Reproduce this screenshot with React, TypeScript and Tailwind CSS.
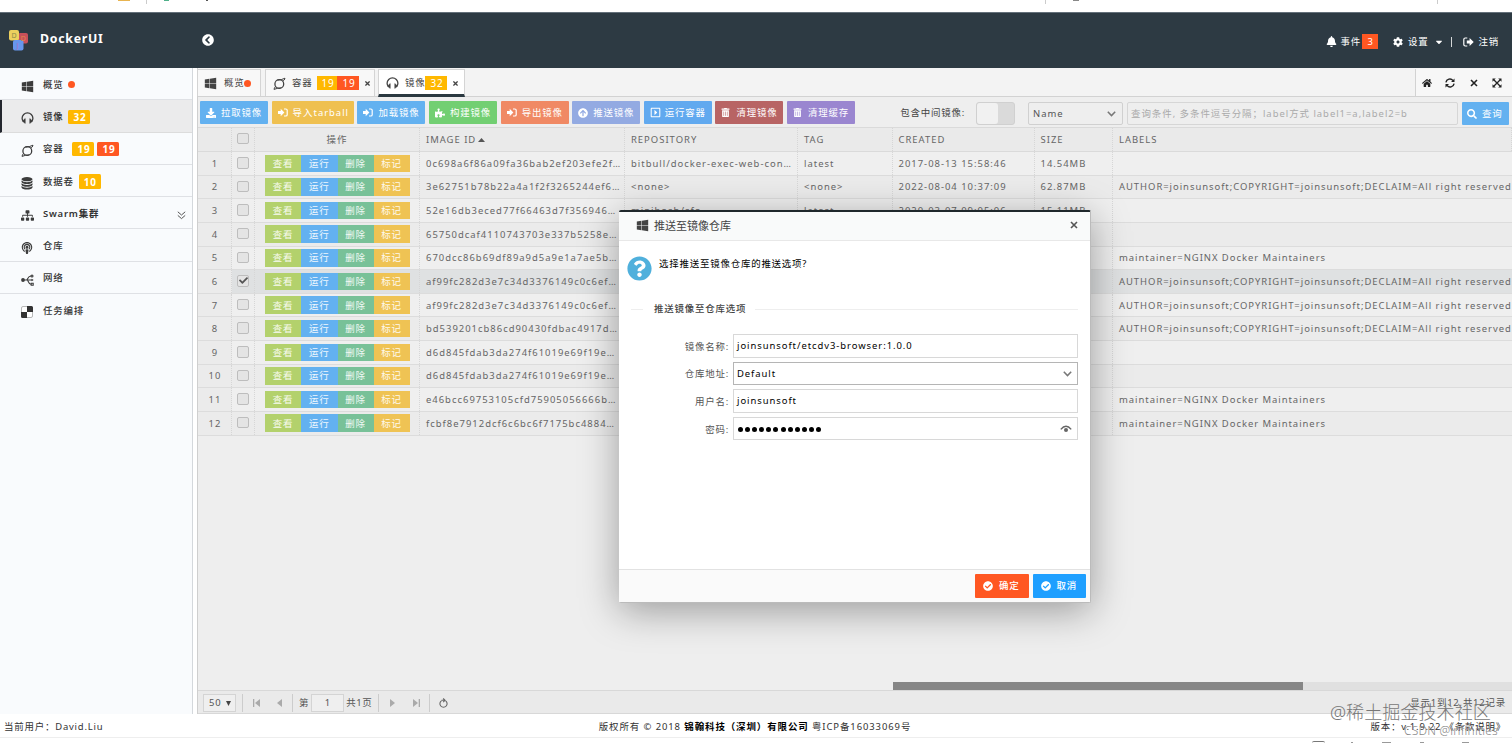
import { useState } from "react";
import type { ReactNode } from "react";
import {
  FaArrowCircleUp,
  FaBell,
  FaCaretDown,
  FaCheck,
  FaCheckCircle,
  FaChevronCircleLeft,
  FaCog,
  FaDownload,
  FaHome,
  FaPodcast,
  FaPuzzlePiece,
  FaQuestionCircle,
  FaRegCaretSquareRight,
  FaSearch,
  FaSitemap,
  FaTimes,
  FaTrashAlt,
  FaWindows,
} from "react-icons/fa";

/* ---------- icons ---------- */

const HeadsetIcon = () => (
  <svg width="13" height="12" viewBox="0 0 13 12" fill="none" stroke="currentColor">
    <path d="M2.6 10A5.4 5.4 0 0 1 1.1 6.3a5.4 5.4 0 0 1 10.8 0A5.4 5.4 0 0 1 10.4 10" strokeWidth="1.3" />
    <path d="M4.2 6.6v4.8L1.6 9zM8.8 6.6v4.8L11.4 9z" fill="currentColor" strokeWidth=".6" />
  </svg>
);

const RingIcon = () => (
  <svg width="13" height="13" viewBox="0 0 13 13" fill="none" stroke="currentColor" strokeWidth="1.3">
    <circle cx="6.3" cy="7" r="4.4" />
    <path d="M4.4 3.2Q8.4 3 12 1.2Q11.6 3.2 9.8 4.4M8.2 10.9Q4.4 11 1 12.4Q1.2 10.8 2.6 9.4" strokeWidth="1" />
  </svg>
);

const StackIcon = () => (
  <svg width="12" height="13" viewBox="0 0 12 13" fill="currentColor">
    <ellipse cx="6" cy="2.2" rx="5.5" ry="2.1" />
    <path d="M.5 3.5Q2 5.2 6 5.2T11.5 3.5V5Q10.500 7 6 7T.5 5zM.5 6.300Q2 8 6 8T11.500 6.300V7.800Q10.500 9.800 6 9.800T.5 7.800zM.5 9.100Q2 10.800 6 10.800T11.500 9.100V10.600Q10.500 12.600 6 12.600T.5 10.600z" />
  </svg>
);

const NetworkIcon = () => (
  <svg width="13" height="12" viewBox="0 0 13 12" fill="none" stroke="currentColor" strokeWidth="1.1">
    <circle cx="2" cy="6" r="1.9" fill="currentColor" stroke="none" />
    <path d="M3 6h8.500M5.500 6C7 6 6.600 2 10 2M6 6C7.500 6 7 10.200 10 10.200" />
    <circle cx="11" cy="2" r="1" />
    <path d="M10.500 4.800 12.700 6 10.500 7.200z" fill="currentColor" stroke="none" />
    <path d="M10.200 9.200h2v2h-2z" />
  </svg>
);

const TilesIcon = () => (
  <svg width="12" height="12" viewBox="0 0 12 12">
    <rect x=".5" y=".5" width="11" height="11" rx="1.500" fill="#fff" stroke="#999" strokeWidth=".7" />
    <path d="M6 0h4.500Q12 0 12 1.500V6H6zM0 6h6v6H1.500Q0 12 0 10.500z" fill="#333" />
  </svg>
);

const SignInIcon = () => (
  <svg width="10" height="9" viewBox="0 0 10 9">
    <path d="M0 3h2.700V.8L6.400 4.500 2.700 8.200V6H0z" fill="currentColor" />
    <path d="M6 1h1.800q1.400 0 1.400 1.300v4.400Q9.200 8 7.800 8H6" fill="none" stroke="currentColor" strokeWidth="1.200" />
  </svg>
);

const SignOutIcon = () => (
  <svg width="11" height="10" viewBox="0 0 11 10">
    <path d="M3.800 3.400h2.800V1L10.700 5 6.600 9V6.600H3.800z" fill="currentColor" />
    <path d="M4.300 1H2.200Q.8 1 .8 2.400v5.200Q.8 9 2.200 9h2.100" fill="none" stroke="currentColor" strokeWidth="1.200" />
  </svg>
);

const RefreshIcon = () => (
  <svg width="10" height="10" viewBox="0 0 10 10" fill="none" stroke="currentColor" strokeWidth="1.4">
    <path d="M.9 4.400A4 4 0 0 1 8 2.600M9.100 5.600A4 4 0 0 1 2 7.400" />
    <path d="M9.500.6v3.500H6zM.5 9.400V5.900H4z" fill="currentColor" stroke="none" />
  </svg>
);

const ExpandIcon = () => (
  <svg width="10" height="10" viewBox="0 0 10 10" fill="currentColor">
    <path d="M.5.5h3.300L.5 3.800zM9.500.5v3.300L6.200.5zM.5 9.500V6.200l3.300 3.300zM9.500 9.500H6.200l3.300-3.300z" />
    <path d="M2 2l6 6M8 2 2 8" stroke="currentColor" strokeWidth="1.300" />
  </svg>
);

const CloseIcon = ({ className = "" }: { className?: string }) => (
  <svg className={className} width="8" height="8" viewBox="0 0 8 8" stroke="currentColor" strokeWidth="1.600">
    <path d="M1 1l6 6M7 1 1 7" />
  </svg>
);

const Chevron = () => (
  <svg width="9" height="6" viewBox="0 0 9 6" fill="none" stroke="#777" strokeWidth="1.500">
    <path d="M.8 .8 4.500 4.600 8.200 .8" />
  </svg>
);

const Logo = () => (
  <svg width="22" height="22" viewBox="0 0 22 22" className="font-['Noto_Sans']">
    <rect x="10" y="3" width="10" height="10.500" rx="2" fill="#c8505a" />
    <rect x="1" y="0" width="10" height="10.500" rx="2" fill="#ecd05e" />
    <rect x="5" y="10" width="10.500" height="10.500" rx="2" fill="#6796ec" />
    <text x="3.400" y="8" fontSize="7" fill="#8b8a4b">D</text>
    <text x="12.800" y="11" fontSize="7" fill="#e58a4a">D</text>
    <text x="8.600" y="18" fontSize="7" fill="#b06fb8">J</text>
  </svg>
);

/* ---------- data ---------- */

const menus: { name: string; icon: ReactNode; dot?: boolean; badges?: string[]; more?: boolean; gap?: string }[] = [
  { name: "概览", icon: <FaWindows size={13} />, dot: true },
  { name: "镜像", icon: <HeadsetIcon />, badges: ["32"] },
  { name: "容器", icon: <RingIcon />, badges: ["19", "19"], gap: "ml-[9px]" },
  { name: "数据卷", icon: <StackIcon />, badges: ["10"] },
  { name: "Swarm集群", icon: <FaSitemap size={13} />, more: true },
  { name: "仓库", icon: <FaPodcast size={12} /> },
  { name: "网络", icon: <NetworkIcon /> },
  { name: "任务编排", icon: <TilesIcon /> },
];

const tools = [
  { name: "拉取镜像", icon: <FaDownload size={10} />, cls: "w-[68px] bg-[#63b1f0]" },
  { name: "导入tarball", icon: <SignInIcon />, cls: "w-[82.3px] bg-[#efc050] text-[#fbf0d0] tracking-[1px]" },
  { name: "加载镜像", icon: <SignInIcon />, cls: "w-[68px] bg-[#63b1f0]" },
  { name: "构建镜像", icon: <FaPuzzlePiece size={10} />, cls: "w-[68px] bg-[#72cf72]" },
  { name: "导出镜像", icon: <SignInIcon />, cls: "w-[68px] bg-[#f08964]" },
  { name: "推送镜像", icon: <FaArrowCircleUp size={10} />, cls: "w-[68px] bg-[#93aae2]" },
  { name: "运行容器", icon: <FaRegCaretSquareRight size={11} />, cls: "w-[68px] bg-[#61a9ef]" },
  { name: "清理镜像", icon: <FaTrashAlt size={9} />, cls: "w-[68px] bg-[#b86464]" },
  { name: "清理缓存", icon: <FaTrashAlt size={9} />, cls: "w-[68px] bg-[#9a86d0]" },
];

const AUTHOR = "AUTHOR=joinsunsoft;COPYRIGHT=joinsunsoft;DECLAIM=All right reserved";
const NGINX = "maintainer=NGINX Docker Maintainers";

const images = [
  { id: "0c698a6f86a09fa36bab2ef203efe2f…", repo: "bitbull/docker-exec-web-con…", tag: "latest", created: "2017-08-13 15:58:46", size: "14.54MB", labels: "" },
  { id: "3e62751b78b22a4a1f2f3265244ef6…", repo: "<none>", tag: "<none>", created: "2022-08-04 10:37:09", size: "62.87MB", labels: AUTHOR },
  { id: "52e16db3eced77f66463d7f356946…", repo: "minibosh/sfo", tag: "latest", created: "2020-03-07 09:05:06", size: "15.11MB", labels: "" },
  { id: "65750dcaf4110743703e337b5258e…", repo: "", tag: "", created: "", size: "", labels: "" },
  { id: "670dcc86b69df89a9d5a9e1a7ae5b…", repo: "", tag: "", created: "", size: "", labels: NGINX },
  { id: "af99fc282d3e7c34d3376149c0c6ef…", repo: "", tag: "", created: "", size: "", labels: AUTHOR },
  { id: "af99fc282d3e7c34d3376149c0c6ef…", repo: "", tag: "", created: "", size: "", labels: AUTHOR },
  { id: "bd539201cb86cd90430fdbac4917d…", repo: "", tag: "", created: "", size: "", labels: AUTHOR },
  { id: "d6d845fdab3da274f61019e69f19e…", repo: "", tag: "", created: "", size: "", labels: "" },
  { id: "d6d845fdab3da274f61019e69f19e…", repo: "", tag: "", created: "", size: "", labels: "" },
  { id: "e46bcc69753105cfd75905056666b…", repo: "", tag: "", created: "", size: "", labels: NGINX },
  { id: "fcbf8e7912dcf6c6bc6f7175bc4884…", repo: "", tag: "", created: "", size: "", labels: NGINX },
];

const gridCols = "grid grid-cols-[34px_23px_165px_205px_173px_94.5px_142px_78.5px_1fr]";
const cell = "flex items-center border-r border-dotted border-[#d6d6d6] pl-[6px] overflow-hidden whitespace-nowrap";

/* ---------- layout parts ---------- */

function Header() {
  return (
    <header className="flex h-[56px] shrink-0 items-center border-t border-[#64707a] bg-[#2d3a43] text-white">
      <div className="flex w-[202px] items-center pl-[8px]">
        <Logo />
        <span className="mb-[3px] ml-[10px] text-[12.3px] font-bold tracking-[0.75px]">DockerUI</span>
      </div>
      <FaChevronCircleLeft size={12} className="mb-[2px]" />
      <div className="ml-auto mt-[2px] flex items-center pr-[13px]">
        <FaBell size={11} />
        <span className="ml-[4px]">事件</span>
        <span className="ml-[1px] flex h-[15px] w-[16px] items-center justify-center bg-[#ff5722] pl-px">3</span>
        <FaCog size={10} className="ml-[15px]" />
        <span className="ml-[5px]">设置</span>
        <FaCaretDown size={10} className="ml-[5px]" />
        <span className="ml-[7px] h-[10px] w-px bg-white/80" />
        <span className="ml-[11px]">
          <SignOutIcon />
        </span>
        <span className="ml-[5px]">注销</span>
      </div>
    </header>
  );
}

function Sidebar() {
  return (
    <aside className="w-[193px] shrink-0 border-r border-[#d4d8dc] bg-[#f9fbfd]">
      {menus.map((m, i) => (
        <div
          key={m.name}
          className={`flex h-[32.3px] items-center border-b pt-[2px] text-[#333] ${
            i === 1
              ? "border-[#dcdcdc] border-l-2 border-l-[#23262e] bg-[#ebebec] pl-[18.5px]"
              : i === 7
                ? "border-transparent pl-[20.5px]"
                : "border-[#dfe1e5] pl-[20.5px]"
          }`}
        >
          <span className="mt-[3px] flex w-[22.5px] text-[#3c3c3c]">{m.icon}</span>
          <span className={m.more ? "font-semibold" : "font-medium"}>{m.name}</span>
          {m.dot && <span className="ml-[5px] size-[7px] rounded-full bg-[#ff5722]" />}
          {m.badges?.map((b, n) => (
            <span
              key={n}
              className={`flex h-[14.5px] w-[22px] items-center justify-center rounded-[1.5px] pl-[1px] text-[10px] font-bold text-white ${
                n ? "ml-[3px] bg-[#ff5722]" : "bg-[#ffb800]"
              } ${n ? "" : m.gap ?? "ml-[5px]"}`}
            >
              {b}
            </span>
          ))}
          {m.more && (
            <svg className="ml-auto mr-[6px] mt-[3px]" width="9" height="9" viewBox="0 0 9 9" fill="none" stroke="#555">
              <path d="M.8 .8 4.5 4 8.2 .8M.8 4.4 4.5 7.6 8.2 4.4" />
            </svg>
          )}
        </div>
      ))}
    </aside>
  );
}

function Tabs() {
  return (
    <div className="flex h-[29px] shrink-0 border-b border-[#d2d2d2] bg-[#f3f3f3] pt-[1px] text-[#444]">
      <div className="-ml-px flex w-[64px] items-center border border-b-0 border-[#d4d4d4] bg-[#f8f8f8] pl-[6px]">
        <FaWindows size={13} />
        <span className="ml-[7px]">概览</span>
        <span className="size-[7px] rounded-full bg-[#ff5722]" />
      </div>
      <div className="ml-[4px] flex w-[110px] items-center border border-b-0 border-[#d4d4d4] bg-[#f8f8f8] pl-[7px]">
        <RingIcon />
        <span className="ml-[6px]">容器</span>
        <span className="ml-[5px] flex h-[14px] w-[20px] items-center justify-center bg-[#ffb800] pl-px text-[10px] text-white">19</span>
        <span className="flex h-[14px] w-[22px] items-center justify-center bg-[#ff5722] pl-px text-[10px] text-white">19</span>
        <FaTimes size={7} className="ml-[5px]" />
      </div>
      <div className="-mb-px ml-[3px] flex w-[87px] items-center border border-b-[3px] border-[#d4d4d4] border-b-[#2a3840] bg-white pl-[7px] pt-[2px]">
        <HeadsetIcon />
        <span className="ml-[6px]">镜像</span>
        <span className="flex h-[14px] w-[22px] items-center justify-center bg-[#ffb800] pl-px text-[10px] text-white">32</span>
        <FaTimes size={7} className="ml-[5px]" />
      </div>
      <div className="-mb-px ml-auto flex w-[97px] items-center border-b border-l border-[#d2d2d2] bg-[#f7f7f7] pl-[6px] text-[#222]">
        <FaHome size={10} />
        <span className="ml-[13px]"><RefreshIcon /></span>
        <CloseIcon className="ml-[15px]" />
        <span className="ml-[14px]"><ExpandIcon /></span>
      </div>
    </div>
  );
}

function Toolbar() {
  return (
    <div className="flex h-[30px] shrink-0 items-center pl-[2px] pr-[3px]">
      <div className="flex gap-[3.6px]">
        {tools.map((t) => (
          <button key={t.name} className={`flex h-[23px] items-center whitespace-nowrap rounded-[1px] pl-[6px] pt-px text-white ${t.cls}`}>
            <span className="flex w-[15px]">{t.icon}</span>
            {t.name}
          </button>
        ))}
      </div>
      <span className="ml-auto mt-px text-[#444]">包含中间镜像:</span>
      <span className="ml-[11px] mt-[2px] flex h-[23px] w-[39px] rounded-[3px] border border-[#d0d0d0] bg-[#dadada]">
        <span className="w-[21px] rounded-[3px] bg-[#f1f1f1]" />
      </span>
      <div className="ml-[13px] mt-[2px] flex h-[23px] w-[95px] items-center justify-between rounded-[2px] border border-[#d0d0d0] pl-[4px] pr-[6px] pt-px tracking-[1px] text-[#555]">
        Name <Chevron />
      </div>
      <div className="ml-[4px] mt-[2px] flex h-[23px] w-[331px] items-center overflow-hidden whitespace-nowrap rounded-[2px] border border-[#d6d6d6] pl-[3px] pt-px tracking-[0.98px] text-[#aaa]">
        查询条件, 多条件逗号分隔；label方式 label1=a,label2=b
      </div>
      <button className="ml-[4px] mt-[2px] flex h-[23px] w-[47px] items-center rounded-[1px] bg-[#63b1f0] pl-[5px] pt-px text-white">
        <FaSearch size={10} className="mr-[5px]" />
        查询
      </button>
    </div>
  );
}

function CheckBox({ checked = false, onClick }: { checked?: boolean; onClick?: () => void }) {
  return (
    <span onClick={onClick} className="mb-[2px] flex size-[11.5px] items-center justify-center rounded-[2px] border border-[#bdbdbd] bg-[#e4e4e4]">
      {checked && <FaCheck size={9} className="text-[#555]" />}
    </span>
  );
}

function ImageTable() {
  const [selected, setSelected] = useState(5);

  return (
    <div className="min-h-0 flex-1 overflow-hidden bg-[#eee] tracking-[1px] text-[#666]">
      <div className={`${gridCols} h-[25px] border-b border-t border-[#dadada] bg-[#eaeaea]`}>
        <div className={cell} />
        <div className={`${cell} justify-center !pl-0`}><CheckBox /></div>
        <div className={`${cell} justify-center !pl-0`}>操作</div>
        <div className={cell}>
          IMAGE ID
          <svg className="ml-[2px]" width="7" height="4" viewBox="0 0 7 4"><path d="M0 4 3.5 0 7 4z" fill="#555" /></svg>
        </div>
        <div className={cell}>REPOSITORY</div>
        <div className={cell}>TAG</div>
        <div className={cell}>CREATED</div>
        <div className={cell}>SIZE</div>
        <div className={cell}>LABELS</div>
      </div>
      {images.map((row, i) => (
        <div
          key={i}
          className={`${gridCols} h-[23.64px] border-b border-[#dcdcdc] ${
            i === selected ? "bg-[#dfe1e2]" : i % 2 ? "bg-[#ebebeb]" : "bg-[#efefef]"
          }`}
        >
          <div className={`${cell} justify-center bg-[#ebebeb] !pl-px pt-px`}>{i + 1}</div>
          <div className={`${cell} justify-center !pl-0 pt-px`}>
            <CheckBox checked={i === selected} onClick={() => setSelected(i)} />
          </div>
          <div className={`${cell} !pl-[10px] tracking-[0.8px] text-white/90`}>
            <span className="flex h-[17.5px] w-[36px] items-center justify-center bg-[#b3d16c] pt-px">查看</span>
            <span className="flex h-[17.5px] w-[36.5px] items-center justify-center bg-[#63b1f0] pt-px">运行</span>
            <span className="flex h-[17.5px] w-[36px] items-center justify-center bg-[#78c198] pt-px">删除</span>
            <span className="flex h-[17.5px] w-[36px] items-center justify-center bg-[#efc354] pt-px">标记</span>
          </div>
          <div className={`${cell} pt-px`}>{row.id}</div>
          <div className={`${cell} pt-px`}>{row.repo}</div>
          <div className={`${cell} pt-px`}>{row.tag}</div>
          <div className={`${cell} pt-px`}>{row.created}</div>
          <div className={`${cell} pt-px`}>{row.size}</div>
          <div className={`${cell} !border-r-0 pt-px tracking-[0.97px]`}>{row.labels}</div>
        </div>
      ))}
    </div>
  );
}

function Pager() {
  return (
    <div className="flex h-[24px] shrink-0 items-center border-b border-t border-[#d8d8d8] bg-[#eaeaea] pl-[5px] pr-[6px] pt-px text-[#555]">
      <div className="flex h-[18px] w-[33px] items-center justify-between border border-[#d4d4d4] bg-[#efefef] pl-[5px] pr-[4px] pt-px">
        50
        <svg width="5" height="5" viewBox="0 0 5 5"><path d="M0 0h5L2.500 5z" fill="#444" /></svg>
      </div>
      <span className="ml-[6px] h-[18px] w-px bg-[#ccc]" />
      <svg className="ml-[10px]" width="7" height="8" viewBox="0 0 7 8" fill="#aaa"><path d="M0 0h1.300v8H0zM7 0v8L2 4z" /></svg>
      <svg className="ml-[17px]" width="5" height="8" viewBox="0 0 5 8" fill="#aaa"><path d="M5 0v8L0 4z" /></svg>
      <span className="ml-[10px] h-[18px] w-px bg-[#ccc]" />
      <span className="ml-[6px]">第</span>
      <span className="ml-[2px] flex h-[18px] w-[33px] items-center justify-center border border-[#d4d4d4] bg-[#efefef] pt-px">1</span>
      <span className="ml-[2px] tracking-[0.6px]">共1页</span>
      <span className="ml-[6px] h-[18px] w-px bg-[#ccc]" />
      <svg className="ml-[11px]" width="5" height="8" viewBox="0 0 5 8" fill="#aaa"><path d="M0 0v8l5-4z" /></svg>
      <svg className="ml-[18px]" width="7" height="8" viewBox="0 0 7 8" fill="#aaa"><path d="M0 0v8l5-4zM5.700 0H7v8H5.700z" /></svg>
      <span className="ml-[9px] h-[18px] w-px bg-[#ccc]" />
      <svg className="ml-[9px]" width="9" height="10" viewBox="0 0 9 10" fill="none" stroke="#666" strokeWidth="1.100">
        <path d="M2.600 2.600A3.600 3.600 0 1 0 6.400 2.600" />
        <path d="M2.500 2.300h2.800M4.200.5 6 2.300 4.200 4.100" />
      </svg>
      <span className="ml-auto">显示1到12,共12记录</span>
    </div>
  );
}

function Field({ label, children, dark = false }: { label: string; children: ReactNode; dark?: boolean }) {
  return (
    <div className="flex h-[23.6px] items-center">
      <label className="w-[111px] pr-[4px] pt-[2px] text-right text-[#555]">{label}:</label>
      <div
        className={`flex h-full flex-1 items-center justify-between border bg-white pl-[3px] pr-[5px] pt-px tracking-[0.95px] text-black ${
          dark ? "border-[#b5b5b5]" : "border-[#d8d8d8]"
        }`}
      >
        {children}
      </div>
    </div>
  );
}

function PushDialog() {
  return (
    <div className="absolute left-[619px] top-[210px] flex h-[393px] w-[472px] flex-col rounded-[2px] border-b border-r border-t-2 border-b-[#bbb] border-r-[#bbb] border-t-[#20282c] bg-white shadow-[0_8px_38px_rgba(0,0,0,0.35)]">
      <div className="flex h-[29px] items-center border-b border-[#e8e8e8] bg-[#f9fafa] pb-px pl-[17px] pr-[12px] text-[#444]">
        <FaWindows size={13} />
        <span className="ml-[5px] text-[11px] tracking-normal">推送至镜像仓库</span>
        <CloseIcon className="mb-px ml-auto text-[#555]" />
      </div>
      <div className="flex-1 pr-[12px]">
        <div className="flex pl-[8px] pt-[15px]">
          <FaQuestionCircle size={25} className="text-[#50b0dc]" />
          <span className="ml-[7px] mt-px text-black">选择推送至镜像仓库的推送选项?</span>
        </div>
        <div className="mt-[21px] flex items-center pl-[12px] font-medium text-[#444]">
          <span className="mr-[11px] h-px w-[12px] bg-[#eee]" />
          推送镜像至仓库选项
          <span className="ml-[9px] h-px flex-1 bg-[#eee]" />
        </div>
        <div className="mt-[18px] flex flex-col gap-[4px] pl-[3px]">
          <Field label="镜像名称">joinsunsoft/etcdv3-browser:1.0.0</Field>
          <Field label="仓库地址" dark>
            Default <Chevron />
          </Field>
          <Field label="用户名">joinsunsoft</Field>
          <Field label="密码">
            <span className="ml-px flex gap-[2.1px]">
              {Array.from({ length: 12 }, (_, i) => (
                <span key={i} className="size-[5px] rounded-full bg-black" />
              ))}
            </span>
            <svg width="12" height="8" viewBox="0 0 12 8" fill="none" stroke="#666">
              <path d="M.8 4.400Q6-2 11.200 4.400" strokeWidth="1.400" />
              <circle cx="6" cy="5" r="2" fill="#666" stroke="none" />
            </svg>
          </Field>
        </div>
      </div>
      <div className="flex h-[33px] items-center justify-end gap-[4px] border-t border-[#e2e2e2] bg-[#fafafa] pr-[4px] text-white">
        <button className="flex h-[23.5px] w-[53.5px] items-center rounded-[1px] bg-[#ff5722] pl-[8px] font-medium">
          <FaCheckCircle size={10} className="mr-[6px]" />
          确定
        </button>
        <button className="flex h-[23.5px] w-[53.5px] items-center rounded-[1px] bg-[#1e9fff] pl-[8px] font-medium">
          <FaCheckCircle size={10} className="mr-[6px]" />
          取消
        </button>
      </div>
    </div>
  );
}

export default function App() {
  return (
    <div className="relative flex h-[743px] w-[1512px] flex-col overflow-hidden bg-white font-['Noto_Sans','Noto_Sans_CJK_SC',sans-serif] text-[9.45px] leading-[14px] tracking-[0.8px]">
      {/* lower edge of the browser bookmarks bar */}
      <div className="flex h-[12px] shrink-0 items-start">
        <span className="ml-[118px] h-[1px] w-[12px] bg-[#e8b450]" />
        <span className="ml-[16px] h-[4px] w-px bg-[#ccc]" />
        <span className="ml-[17px] h-[1px] w-[5px] bg-[#4fb08a]" />
        <span className="ml-[37px] h-[1px] w-[2px] bg-[#555]" />
        <span className="ml-[837px] h-[4px] w-px bg-[#ccc]" />
        <span className="ml-[27px] h-[1px] w-[6px] bg-[#888]" />
        <span className="ml-[358px] h-[4px] w-px bg-[#ccc]" />
      </div>
      <Header />

      <div className="flex min-h-0 flex-1">
        <Sidebar />
        <main className="ml-[4px] flex min-w-0 flex-1 flex-col border-l border-[#cfcfcf] bg-[#eee]">
          <Tabs />
          <Toolbar />
          <ImageTable />
          <div className="flex h-[8px] shrink-0">
            <span className="ml-[695px] w-[410px] bg-[#868686]" />
            <span className="flex-1 bg-[#e0e0e0]" />
          </div>
          <Pager />
        </main>
      </div>

      {/* footer */}
      <footer className="grid h-[24px] shrink-0 grid-cols-3 items-center border-b border-[#eee] pl-[4px] pr-[6px] pt-[2px] text-[#333]">
        <span>当前用户：David.Liu</span>
        <span className="whitespace-nowrap text-center tracking-[0.92px]">
          版权所有 © 2018 <b className="text-black">锦翰科技（深圳）有限公司</b> 粤ICP备16033069号
        </span>
        <span className="text-right">版本：v.1.9.22 《条款说明》</span>
      </footer>
      <div className="flex h-[5px] shrink-0 items-end">
        <span className="ml-[1312px] h-[2px] w-[13px] rounded-t-full border-t border-[#777]" />
        <span className="ml-[26px] h-px w-[2px] bg-[#999]" />
        <span className="ml-[29px] h-px w-[9px] bg-[#999]" />
        <span className="ml-[29px] h-px w-[4px] bg-[#999]" />
        <span className="ml-[38px] h-px w-[7px] bg-[#999]" />
      </div>

      <PushDialog />

      {/* watermarks */}
      <span className="absolute left-[1330px] top-[700px] whitespace-nowrap text-[18.1px] font-light leading-[24px] tracking-normal text-[#777]">
        @稀土掘金技术社区
      </span>
      <span className="absolute left-[1404px] top-[723px] whitespace-nowrap text-[12px] font-light leading-[16px] tracking-[0.2px] text-[#888]">
        CSDN @infinities
      </span>
    </div>
  );
}
